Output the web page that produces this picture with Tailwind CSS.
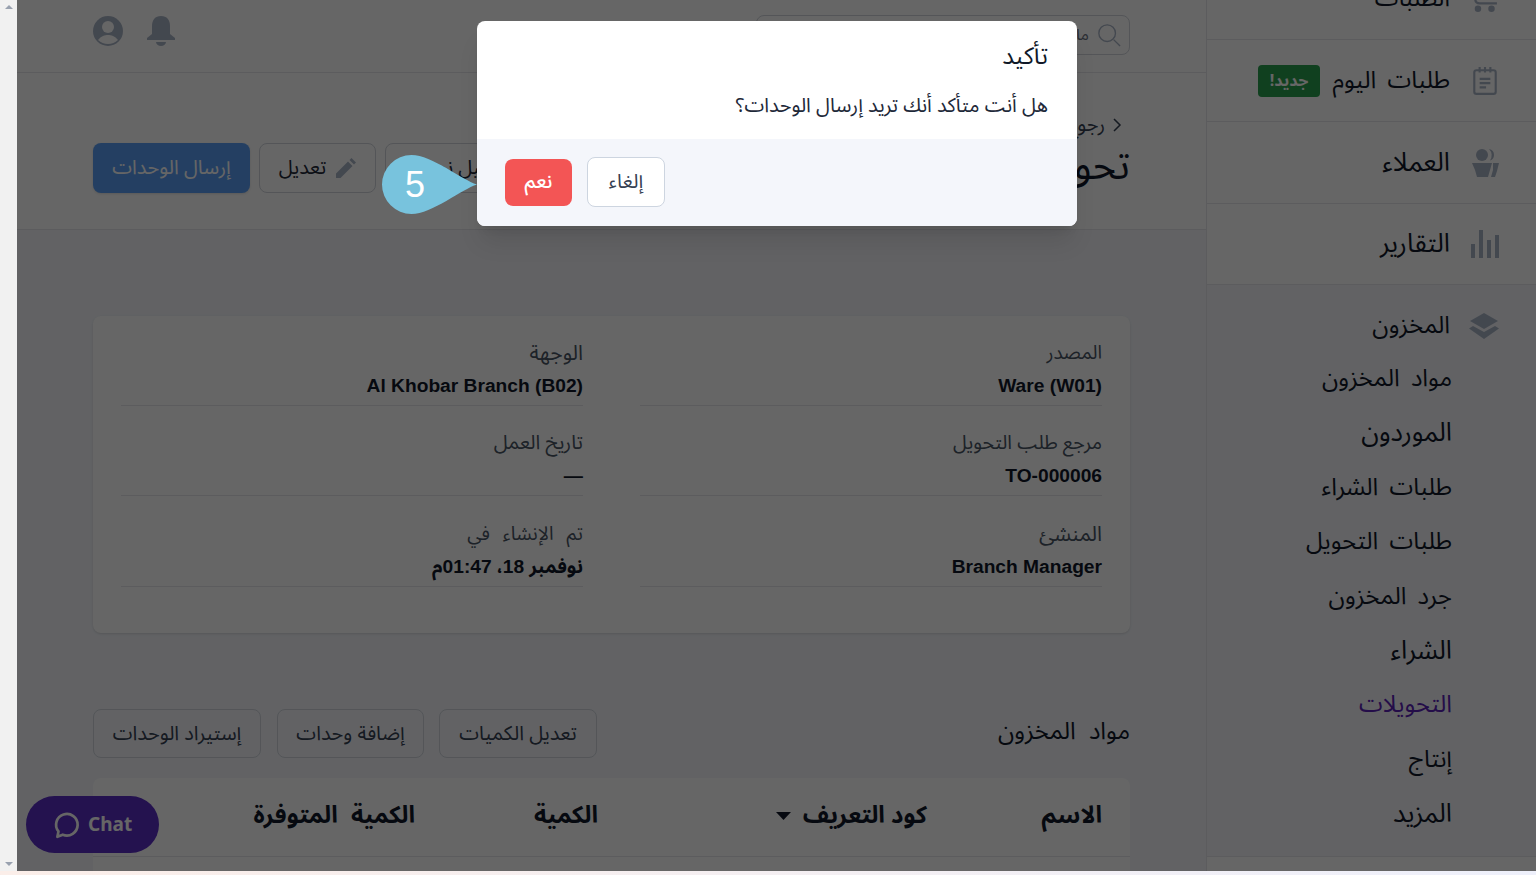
<!DOCTYPE html>
<html lang="ar">
<head>
    <meta charset="UTF-8">
    <title>تحويل المخزون</title>
    <script src="https://cdn.jsdelivr.net/npm/@tailwindcss/browser@4"></script>
</head>
<body class="h-[875px] overflow-hidden bg-white font-['Noto_Sans_Arabic','Liberation_Sans',sans-serif] text-gray-900">
    <div dir="rtl" class="flex h-[871px]">
        <!-- App -->
        <div class="relative flex flex-1 overflow-hidden bg-[#f4f6fb]">
            <!-- Sidebar -->
            <aside class="flex w-[330px] shrink-0 flex-col border-l border-gray-200 pr-[30px] text-[24px] leading-[32px] text-gray-900 [word-spacing:5px]">
                <nav class="-mt-[42px] -mr-[30px] bg-white pr-[30px]">
                    <a class="flex h-[82px] items-center gap-[21px] -mr-[30px] pr-[37px] border-b border-gray-200">
                        <svg class="h-[26px] w-[28px] text-[#a9b4c6]" viewBox="0 0 24 24" fill="none" stroke="currentColor" stroke-width="2"><path d="M3 0v12q0 4 4 4h16"/><circle cx="5.500" cy="21" r="2" fill="currentColor"/><circle cx="18" cy="21" r="2" fill="currentColor"/></svg>
                        <span>الطلبات</span>
                    </a>
                    <a class="flex h-[82px] items-center gap-[21px] -mr-[30px] pr-[37px] border-b border-gray-200">
                        <svg class="h-[30px] w-[28px] text-[#a9b4c6]" viewBox="0 0 24 28" fill="none" stroke="currentColor" stroke-width="2"><rect x="2" y="4" width="20" height="22" rx="2"/><path d="M7 1v5M12 1v5M17 1v5M7 12h10M7 16h10M7 20h6"/></svg>
                        <span>طلبات اليوم</span>
                        <span class="-mr-[9px] rounded-[4px] bg-[#28a04e] px-[12px] text-[16px] font-bold leading-[32px] text-white">جديد!</span>
                    </a>
                    <a class="flex h-[82px] items-center gap-[21px] -mr-[30px] pr-[37px] border-b border-gray-200">
                        <svg class="h-[28px] w-[28px] text-[#a9b4c6]" viewBox="0 0 28 28" fill="currentColor"><circle cx="11" cy="6" r="6"/><path d="M18 0a6 6 0 0 1 5 6 6 6 0 0 1-4 5.600A9 9 0 0 0 18 0z"/><path d="M1 14h20l-2 7-2 7H6l-2-7z"/><path d="M22 14h6l-2 8-2 6h-4l2-7z"/></svg>
                        <span class="text-[26px]">العملاء</span>
                    </a>
                    <a class="flex h-[81px] items-center gap-[21px] -mr-[30px] pr-[37px] border-b border-gray-200">
                        <svg class="h-[28px] w-[28px] text-[#a9b4c6]" viewBox="0 0 28 28" fill="currentColor"><path d="M0 14h4v14H0zM8 0h4v28H8zM16 10h4v18h-4zM24 5h4v23h-4z"/></svg>
                        <span class="text-[26px]">التقارير</span>
                    </a>
                </nav>
                <div class="flex h-[82px] shrink-0 items-center gap-[19px] pr-[7px]">
                    <svg class="h-[26px] w-[30px] text-[#a9b4c6]" viewBox="0 0 30 26" fill="currentColor"><path d="M15 0l14 8-14 8L1 8z"/><path d="M4 13l11 6 11-6 4 2.500L15 26 0 15.500z"/></svg>
                    <span>المخزون</span>
                </div>
                <ul class="-mt-[4px] flex flex-col pr-[54px]">
                    <li class="h-[54.400px]">مواد المخزون</li>
                    <li class="h-[54.400px] text-[26px]">الموردون</li>
                    <li class="h-[54.400px]">طلبات الشراء</li>
                    <li class="h-[54.400px]">طلبات التحويل</li>
                    <li class="h-[54.400px]">جرد المخزون</li>
                    <li class="h-[54.400px] text-[26px]">الشراء</li>
                    <li class="h-[54.400px] text-[#5b21b6]">التحويلات</li>
                    <li class="h-[54.400px]">إنتاج</li>
                    <li class="h-[58px] text-[26px]">المزيد</li>
                </ul>
                <div class="-mr-[30px] flex-1 border-t border-gray-200 bg-white"></div>
            </aside>

            <!-- Main -->
            <main class="flex min-w-0 flex-1 flex-col">
                <header class="flex h-[73px] shrink-0 items-center justify-between border-b border-gray-200 bg-white px-[76px] pb-[3px]">
                    <div class="flex h-[40px] w-[374px] items-center gap-2 rounded-lg border border-gray-300 px-[8px] text-[16px] text-gray-500">
                        <svg class="h-[24px] w-[24px] text-[#a9b4c6]" viewBox="0 0 26 26" fill="none" stroke="currentColor" stroke-width="1.500"><circle cx="11" cy="11" r="9"/><path d="M18 18l7 7"/></svg>
                        <span>ما الذي تبحث عنه</span>
                    </div>
                    <div class="-mt-[8px] flex items-center gap-[24px]">
                        <svg class="h-[31px] w-[28px] text-[#a9b4c6]" viewBox="0 0 28 31" fill="currentColor"><path d="M14 1c6 0 9 4 9 10v8l5 4v2H0v-2l5-4v-8C5 5 8 1 14 1z"/><path d="M9 27h10a5 4 0 0 1-10 0z"/></svg>
                        <svg class="h-[30px] w-[30px] text-[#a9b4c6]" viewBox="0 0 30 30"><circle cx="15" cy="15" r="15" fill="currentColor"/><circle cx="15" cy="11" r="6" fill="white"/><path d="M5 24c3-4 7-5 10-5s7 1 10 5c-3 2.500-6 4-10 4s-7-1.500-10-4z" fill="white"/></svg>
                    </div>
                </header>

                <section class="flex h-[157px] shrink-0 items-start justify-between border-b border-gray-200 bg-white pl-[76px] pr-[76px] pt-[36px]">
                    <div>
                        <a class="flex items-center gap-[7px] pr-[8px] text-[20px] leading-[32px] text-gray-700">
                            <svg class="h-[16px] w-[10px]" viewBox="0 0 10 16" fill="none" stroke="currentColor" stroke-width="1.500"><path d="M2 2l6 6-6 6"/></svg>
                            <span>رجوع</span>
                        </a>
                        <h1 class="mt-[3px] text-[40px] leading-[46px] text-gray-900">تحويل المخزون</h1>
                    </div>
                    <div class="mt-[34px] flex gap-[9px] text-[20px]">
                        <button class="h-[50px] w-[135px] overflow-hidden rounded-lg border border-gray-300 pl-[10px] whitespace-nowrap text-gray-800">تحميل نموذج</button>
                        <button class="flex h-[50px] w-[117px] items-center justify-center gap-[10px] rounded-lg border border-gray-300 text-gray-800">
                            <svg class="h-[20px] w-[20px] text-[#a9b4c6]" viewBox="0 0 20 20" fill="currentColor"><path d="M0 20v-4.500L12 3.500 16.500 8 4.500 20zM13.500 2l2-2L20 4.500l-2 2z"/></svg>
                            <span>تعديل</span>
                        </button>
                        <button class="h-[50px] w-[157px] rounded-lg bg-[#5b9ff5] text-white shadow-sm">إرسال الوحدات</button>
                    </div>
                </section>

                <div class="flex flex-1 flex-col px-[76px] pt-[86px]">
                    <!-- Details card -->
                    <div class="grid h-[317px] shrink-0 grid-cols-2 grid-rows-[90px_90px_91px] content-start gap-x-[57px] rounded-lg bg-white px-[28px] shadow-sm">
                        <div class="flex flex-col justify-end border-b border-gray-200 pb-[1px]">
                            <p class="text-[19px] leading-[30px] text-gray-600">المصدر</p>
                            <p class="font-['Liberation_Sans'] font-bold text-[19.200px] leading-[36px]">Ware (W01)</p>
                        </div>
                        <div class="flex flex-col justify-end border-b border-gray-200 pb-[1px]">
                            <p class="text-[21px] leading-[30px] text-gray-600">الوجهة</p>
                            <p class="font-['Liberation_Sans'] font-bold text-[19.200px] leading-[36px]">Al Khobar Branch (B02)</p>
                        </div>
                        <div class="flex flex-col justify-end border-b border-gray-200 pb-[1px]">
                            <p class="text-[19.600px] leading-[30px] text-gray-600">مرجع طلب التحويل</p>
                            <p class="font-['Liberation_Sans'] font-bold text-[19.200px] leading-[36px]">TO-000006</p>
                        </div>
                        <div class="flex flex-col justify-end border-b border-gray-200 pb-[1px]">
                            <p class="text-[20px] leading-[30px] text-gray-600">تاريخ العمل</p>
                            <p class="font-['Liberation_Sans'] font-bold text-[19.200px] leading-[36px]">—</p>
                        </div>
                        <div class="flex flex-col justify-end border-b border-gray-200 pb-[1px]">
                            <p class="text-[21px] leading-[30px] text-gray-600">المنشئ</p>
                            <p class="font-['Liberation_Sans'] font-bold text-[19.200px] leading-[36px]">Branch Manager</p>
                        </div>
                        <div class="flex flex-col justify-end border-b border-gray-200 pb-[1px]">
                            <p class="text-[19.200px] leading-[30px] text-gray-600 [word-spacing:8px]">تم الإنشاء في</p>
                            <p class="font-['Noto_Sans_Arabic','Liberation_Sans'] font-bold text-[19.200px] leading-[36px]">نوفمبر <span class="font-['Liberation_Sans']">18</span>، <span class="font-['Liberation_Sans']">01:47</span>م</p>
                        </div>
                    </div>

                    <!-- Items -->
                    <div class="mt-[76px] flex h-[49px] shrink-0 items-center justify-between">
                        <h2 class="-mt-[3px] text-[24px] text-gray-900 [word-spacing:7px]">مواد المخزون</h2>
                        <div class="flex gap-[15px] text-[20px] text-gray-700">
                            <button class="h-[49px] w-[158px] rounded-lg border border-gray-300">تعديل الكميات</button>
                            <button class="h-[49px] w-[147px] rounded-lg border border-gray-300">إضافة وحدات</button>
                            <button class="mr-[1px] h-[49px] w-[168px] rounded-lg border border-gray-300">إستيراد الوحدات</button>
                        </div>
                    </div>
                    <div class="mt-[20px] flex-1 rounded-t-lg bg-white">
                        <div class="flex h-[79px] items-center border-b border-gray-200 pb-[2px] text-[24px] font-bold">
                            <span class="w-[203px] pr-[28px]">الاسم</span>
                            <span class="flex w-[329px] items-center gap-[12px]">كود التعريف
                                <svg class="h-[8px] w-[15px]" viewBox="0 0 15 8" fill="currentColor"><path d="M0 0h15L7.500 8z"/></svg>
                            </span>
                            <span class="w-[183px]">الكمية</span>
                            <span class="[word-spacing:7px]">الكمية المتوفرة</span>
                        </div>
                    </div>
                </div>
            </main>

            <!-- Chat launcher -->
            <button dir="ltr" class="absolute bottom-[18px] left-[9px] flex h-[57px] w-[133px] items-center gap-[8px] rounded-full bg-[#5a2dc5] pl-[26px] font-['Noto_Sans',sans-serif] text-[19px] font-bold text-white">
                <svg class="h-[28px] w-[28px]" viewBox="0 0 26 26" fill="none" stroke="currentColor" stroke-width="2.500"><path d="M5 24l1-5a10 10 0 1 1 4 3z" stroke-linejoin="round"/></svg>
                Chat
            </button>

            <!-- Dimmed backdrop -->
            <div class="absolute inset-0 bg-black/60"></div>

            <!-- Confirm dialog -->
            <div class="absolute left-[460px] top-[21px] w-[600px] overflow-hidden rounded-lg bg-white shadow-xl">
                <div class="h-[118px] px-[29px] pt-[20px]">
                    <h3 class="text-[24px] leading-[32px] text-gray-900">تأكيد</h3>
                    <p class="mt-[17px] text-[20px] leading-[32px] text-gray-800">هل أنت متأكد أنك تريد إرسال الوحدات؟</p>
                </div>
                <div class="flex h-[87px] items-center justify-end gap-[15px] bg-[#f4f6fb] px-[28px] pb-[1px]">
                    <button class="h-[50px] w-[78px] rounded-lg border border-[#cdd5e0] bg-white text-[20px] text-gray-700">إلغاء</button>
                    <button class="h-[47px] w-[67px] rounded-lg bg-[#f35555] text-[20px] font-medium text-white">نعم</button>
                </div>
            </div>

            <!-- Step marker -->
            <div dir="ltr" class="absolute left-[365px] top-[155px] h-[59px] w-[95px]">
                <svg class="absolute inset-0" viewBox="0 0 95 59" fill="#78c3dd"><path d="M95 29.500C80 34 50 59 29.500 59a29.500 29.500 0 0 1 0-59C50 0 80 25 95 29.500z"/></svg>
                <span class="absolute left-[23px] top-[7px] font-['Liberation_Sans'] text-[36px] leading-[46px] text-white">5</span>
            </div>
        </div>

        <!-- Page scrollbar -->
        <div class="flex w-[17px] shrink-0 flex-col items-center justify-between bg-[#f1f1f1] py-[5px]">
            <div class="h-0 w-0 border-x-[4px] border-b-[4px] border-x-transparent border-b-gray-400"></div>
            <div class="h-0 w-0 border-x-[4px] border-t-[4px] border-x-transparent border-t-gray-400"></div>
        </div>
    </div>
    <div class="h-[4px] bg-gradient-to-r from-[#fbeee9] to-[#eef0fb]"></div>
</body>
</html>
